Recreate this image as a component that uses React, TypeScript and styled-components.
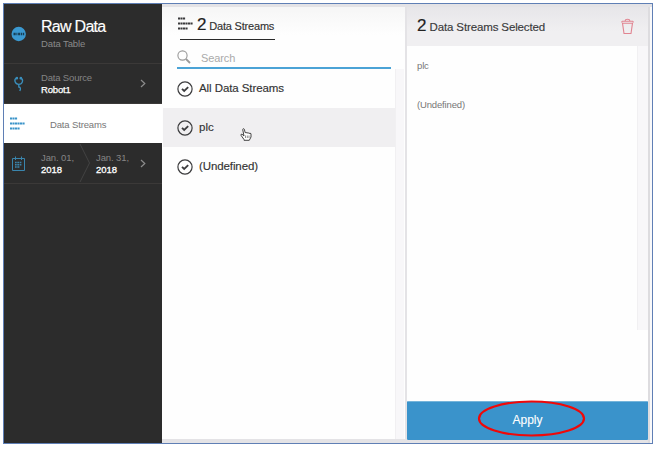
import React from "react";
import styled, { createGlobalStyle } from "styled-components";

const Global = createGlobalStyle`
  * { box-sizing: border-box; }
  body { margin: 0; background: #fff; font-family: "Liberation Sans", Arial, sans-serif; }
`;

const Page = styled.div`
  width: 657px;
  height: 449px;
  padding: 3px;
  overflow: hidden;
`;

const Frame = styled.div`
  display: flex;
  width: 650px;
  height: 441px;
  border: 1px solid #5f7fb5;
  background: #e4e3e6;
`;

const Sidebar = styled.nav`
  flex: 0 0 158px;
  display: flex;
  flex-direction: column;
  background: #2c2c2c;
`;

const SideRow = styled.div<{ $h: number; $active?: boolean }>`
  display: flex;
  flex: 0 0 ${(p) => p.$h}px;
  align-items: center;
  background: ${(p) => (p.$active ? "#fff" : "transparent")};
  border-bottom: 1px solid ${(p) => (p.$active ? "#fff" : "#3b3938")};
`;

const IconCell = styled.div`
  flex: 0 0 37px;
  padding-left: 6px;
  display: flex;
  svg { display: block; }
`;

const Stack = styled.div<{ $w?: number; $indent?: number }>`
  display: flex;
  flex-direction: column;
  width: ${(p) => (p.$w ? `${p.$w}px` : "auto")};
  padding-left: ${(p) => p.$indent ?? 0}px;
`;

const Text = styled.span<{ $size: number; $line: number; $color: string; $track?: number; $stroke?: number }>`
  display: block;
  white-space: nowrap;
  font-size: ${(p) => p.$size}px;
  line-height: ${(p) => p.$line}px;
  color: ${(p) => p.$color};
  letter-spacing: ${(p) => p.$track ?? 0}px;
  -webkit-text-stroke: ${(p) => p.$stroke ?? 0}px ${(p) => p.$color};
`;

const ActiveLabel = styled.div`
  padding: 3px 0 0 9px;
`;

const Push = styled.div`
  margin: 0 16px 0 auto;
  display: flex;
`;

const Streams = styled.section`
  flex: 0 0 243px;
  display: flex;
  flex-direction: column;
  margin: 3px 0 4px;
  padding-left: 1px;
  background: linear-gradient(#f6f6f6, #fefefe 28px);
`;

const StreamsTitle = styled.header`
  display: flex;
  align-items: baseline;
  width: 95px;
  height: 33px;
  margin-left: 17px;
  padding-top: 7px;
  border-bottom: 1px solid #2a2a2a;
  svg { margin: 0 4px 0 -2px; overflow: visible; }
`;

const SearchBar = styled.label`
  display: flex;
  align-items: center;
  width: 214px;
  height: 29px;
  margin-left: 14px;
  padding-top: 7px;
  border-bottom: 2px solid #4ba3d6;
`;

const SearchText = styled.div`
  margin: 1px 0 0 10px;
`;

const ListArea = styled.div`
  flex: 1;
  display: flex;
  min-height: 0;
`;

const List = styled.div`
  flex: 0 0 232px;
`;

const StreamRow = styled.div<{ $hover?: boolean }>`
  display: flex;
  align-items: center;
  gap: 6px;
  height: 39px;
  padding-left: 14px;
  background: ${(p) => (p.$hover ? "#f0eff1" : "transparent")};
  > span { margin-top: -2px; }
`;

const Track = styled.div<{ $w: number; $h?: number }>`
  width: ${(p) => p.$w}px;
  height: ${(p) => (p.$h ? `${p.$h}px` : "auto")};
  background: #f8f7f9;
  border-left: 1px solid #f1f0f2;
`;

const Selected = styled.section`
  flex: 0 0 241px;
  display: flex;
  flex-direction: column;
  margin: 3px 0 3px 2px;
  background: #fefefe;
`;

const SelectedHead = styled.header`
  display: flex;
  align-items: baseline;
  height: 39px;
  padding: 8px 14px 0 10px;
  background: linear-gradient(#e7e6e9, #f0eff1 24px);
`;

const Trash = styled.div`
  margin-left: auto;
  align-self: flex-start;
  svg { display: block; margin-top: 3px; }
`;

const SelectedBody = styled.div`
  flex: 1;
  display: flex;
  justify-content: space-between;
`;

const SelectedList = styled.div`
  padding: 13px 0 0 10px;
  display: flex;
  flex-direction: column;
  gap: 25px;
`;

const Apply = styled.button`
  position: relative;
  display: flex;
  justify-content: center;
  align-items: center;
  height: 39px;
  padding: 0 0 3px;
  border: 0;
  border-top: 1px solid #75b4da;
  border-radius: 1px;
  background: #3a93cb;
  font-family: inherit;
`;

const Ring = styled.svg`
  position: absolute;
  left: 70px;
  top: -3px;
`;

const Pointer = styled.svg`
  margin-left: 20px;
  margin-top: 13px;
`;

const RightEdge = styled.div`
  flex: 1;
  margin-top: 3px;
  background: linear-gradient(90deg, #dddcdf 0 2px, #f9f9fa 2px);
`;

const Bars = ({ color, h = 13 }: { color: string; h?: number }) => (
  <svg width="15" height={h} viewBox={`0 0 15 ${h}`} fill="none" stroke={color} strokeWidth="2" strokeDasharray="2.1 .4">
    <path d={`M0 1.5H7.5M0 ${h / 2}H15M0 ${h - 1.5}H10`} />
  </svg>
);

const Check = () => (
  <svg width="16" height="16" viewBox="0 0 16 16" fill="none" stroke="#3c3c3e">
    <circle cx="8" cy="8" r="7.1" strokeWidth="1.2" />
    <path d="M5 7.8 7.2 10 11.2 6.2" strokeWidth="1.8" />
  </svg>
);

const Chevron = () => (
  <svg width="6" height="9" viewBox="0 0 6 9" fill="none" stroke="#8c8c8c" strokeWidth="1.2">
    <path d="M1 1 4.8 4.5 1 8" />
  </svg>
);

export default function App() {
  return (
    <Page>
      <Global />
      <Frame>
        <Sidebar>
          <SideRow $h={60}>
            <IconCell>
              <svg width="18" height="16" viewBox="0 0 18 16">
                <circle cx="8.7" cy="8" r="7.2" fill="#3b99d1" />
                <path d="M3.5 8H14.2" stroke="#173f56" strokeWidth="2.4" strokeDasharray="2.2 .7 1 .7" />
              </svg>
            </IconCell>
            <Stack>
              <Text $size={16} $line={20} $color="#fff" $track={-0.72} $stroke={0.15}>Raw Data</Text>
              <Text $size={9.5} $line={14} $color="#8a8a8a" $track={-0.1}>Data Table</Text>
            </Stack>
          </SideRow>
          <SideRow $h={40}>
            <IconCell>
              <svg width="18" height="18" viewBox="0 0 18 18" fill="none" stroke="#3a8fbd" strokeWidth="1.3">
                <path d="M6.5 3.2C3.5 4.5 5 9.5 8.8 9.4 12.5 9.3 14 4.8 10.8 3.2M8.8 9.5V12Q11.5 12.3 9.8 16" />
                <circle cx="6.8" cy="3.2" r=".7" /><circle cx="10.8" cy="3.2" r=".7" />
              </svg>
            </IconCell>
            <Stack>
              <Text $size={9.5} $line={13} $color="#858585" $track={-0.17}>Data Source</Text>
              <Text $size={9.5} $line={12} $color="#fff" $stroke={0.25} $track={-0.17}>Robot1</Text>
            </Stack>
            <Push><Chevron /></Push>
          </SideRow>
          <SideRow $h={39} $active>
            <IconCell><Bars color="#3b94c9" /></IconCell>
            <ActiveLabel><Text $size={9.5} $line={13} $color="#777" $track={-0.15}>Data Streams</Text></ActiveLabel>
          </SideRow>
          <SideRow $h={41}>
            <IconCell>
              <svg width="17" height="17" viewBox="0 0 17 17" fill="none" stroke="#3a85ad">
                <path d="M2.5 3.5H14.5V15.5H2.5ZM5.5 1.5V5M11.5 1.5V5" />
                <path d="M5 7.5H12M5 9.7H12M5 12H10" strokeWidth="1.5" strokeDasharray="1.7 .6" />
              </svg>
            </IconCell>
            <Stack $w={38}>
              <Text $size={9.5} $line={13} $color="#858585" $track={-0.1}>Jan. 01,</Text>
              <Text $size={9.5} $line={12} $color="#fff" $stroke={0.3}>2018</Text>
            </Stack>
            <svg width="12" height="40" viewBox="0 0 12 40" fill="none" stroke="#434343">
              <path d="M1 1 10.5 20 1 39" />
            </svg>
            <Stack $w={40} $indent={5}>
              <Text $size={9.5} $line={13} $color="#858585" $track={-0.1}>Jan. 31,</Text>
              <Text $size={9.5} $line={12} $color="#fff" $stroke={0.3}>2018</Text>
            </Stack>
            <Push><Chevron /></Push>
          </SideRow>
        </Sidebar>

        <Streams>
          <StreamsTitle>
            <Bars color="#3a3a3c" />
            <Text $size={17} $line={22} $color="#222" $stroke={0.2}>2</Text>
            <Text $size={11} $line={22} $color="#333" $track={-0.2} $stroke={0.15}>&nbsp;Data Streams</Text>
          </StreamsTitle>
          <SearchBar>
            <svg width="14" height="14" viewBox="0 0 14 14" fill="none" stroke="#999">
              <circle cx="5.5" cy="5.5" r="4.6" strokeWidth="1.1" /><path d="m9 9 4 4" strokeWidth="1.8" />
            </svg>
            <SearchText><Text $size={11} $line={16} $color="#aaa" $track={-0.1}>Search</Text></SearchText>
          </SearchBar>
          <ListArea>
            <List>
              <StreamRow><Check /><Text $size={11.5} $line={16} $color="#333" $track={-0.08} $stroke={0.15}>All Data Streams</Text></StreamRow>
              <StreamRow $hover>
                <Check /><Text $size={11.5} $line={16} $color="#333" $stroke={0.15}>plc</Text>
                <Pointer width="12" height="13" viewBox="0 0 12 13" fill="#fff" stroke="#444" strokeLinejoin="round">
                  <path d="M4 8 2 6.2Q.5 6 1 7.3L4 11.5V12.3H9.3L11 9V5.7Q10 4.7 9 5.5 8.3 4.2 7 5 6 4 5.2 4.7L4.3 1.2Q3-.1 2.7 1.5Z" />
                  <path d="M5.5 7.5V10M7.3 7.5V10M9 7.5V10" strokeWidth=".6" />
                </Pointer>
              </StreamRow>
              <StreamRow><Check /><Text $size={11.5} $line={16} $color="#333" $track={-0.1} $stroke={0.15}>(Undefined)</Text></StreamRow>
            </List>
            <Track $w={9} />
          </ListArea>
        </Streams>

        <Selected>
          <SelectedHead>
            <Text $size={17} $line={22} $color="#222" $stroke={0.2}>2</Text>
            <Text $size={11.5} $line={22} $color="#3a3a3c" $track={-0.13} $stroke={0.15}>&nbsp;Data Streams Selected</Text>
            <Trash>
              <svg width="13" height="17" viewBox="0 0 13 17" fill="none" stroke="#e18491" strokeWidth="1.1">
                <path d="M1 3.3H12M4 3Q4.2 1.2 6.5 1.2T9 3M1.5 5.2H11.5L10 15.5H3ZM.8 3.3V4.5M12.2 3.3V4.5" />
              </svg>
            </Trash>
          </SelectedHead>
          <SelectedBody>
            <SelectedList>
              <Text $size={9.5} $line={14} $color="#777" $track={-0.15}>plc</Text>
              <Text $size={9.5} $line={14} $color="#777" $track={-0.15}>(Undefined)</Text>
            </SelectedList>
            <Track $w={11} $h={284} />
          </SelectedBody>
          <Apply>
            <Text $size={12} $line={16} $color="#fff" $stroke={0.1}>Apply</Text>
            <Ring width="109" height="39" viewBox="0 0 109 39" fill="none" stroke="#f00808" strokeWidth="2.2">
              <ellipse cx="54.5" cy="19.5" rx="52.5" ry="17" />
            </Ring>
          </Apply>
        </Selected>
        <RightEdge />
      </Frame>
    </Page>
  );
}
